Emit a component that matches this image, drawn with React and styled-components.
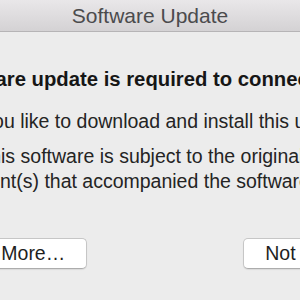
import React from "react";
import styled, {createGlobalStyle} from "styled-components";

const GlobalStyle = createGlobalStyle`
  html, body {
    margin: 0;
    padding: 0;
    background-color: #ECECEC;
    overflow: hidden;
  }
`;

const Viewport = styled.div`
  width: 300px;
  height: 300px;
  overflow: hidden;
  display: flex;
  justify-content: center;
  font-family: "Liberation Sans", Arial, sans-serif;
`;

const Dialog = styled.div`
  flex-shrink: 0;
  width: 666px;
  height: 300px;
  display: flex;
  flex-direction: column;
  background-color: #ECECEC;
`;

const TitleBar = styled.div`
  height: 31px;
  border-bottom: 1px solid #B6B4B6;
  background: linear-gradient(to bottom, #E9E7E9, #D4D2D4);
  display: flex;
  justify-content: center;
  align-items: center;
  font-size: 21px;
  line-height: 31px;
  color: #4B4B4D;
`;

const Content = styled.div`
  padding: 35px 14px 0 106px;
  display: flex;
  flex-direction: column;
`;

const Text = styled.p`
  margin: 0 0 ${props => props.gap}px 0;
  font-size: ${props => props.bold ? 20.3 : 19.5}px;
  line-height: 25px;
  font-weight: ${props => props.bold ? 700 : 400};
  color: ${props => props.bold ? "#161616" : "#242424"};
  white-space: nowrap;
`;

const ButtonRow = styled.div`
  margin-top: 44px;
  margin-left: 1px;
  display: flex;
  align-items: center;
  gap: 12px;
`;

const Spacer = styled.div`
  flex-grow: 1;
`;

const Button = styled.button`
  height: 31px;
  padding: 0 21px;
  border: 1px solid #C6C6C6;
  border-bottom-color: #ACACAC;
  border-radius: 5px;
  background-color: #FFFFFF;
  box-shadow: 0 1px 1px rgba(0, 0, 0, 0.08);
  font-family: "Liberation Sans", Arial, sans-serif;
  font-size: 19.5px;
  color: #1E1E1E;
  white-space: nowrap;
`;

export default function App() {
    return (
        <Viewport>
            <GlobalStyle/>
            <Dialog>
                <TitleBar>Software Update</TitleBar>
                <Content>
                    <Text bold gap={17}>A software update is required to connect to your iPhone.</Text>
                    <Text gap={10}>Would you like to download and install this update now?</Text>
                    <Text gap={0}>
                        Use of this software is subject to the original license<br/>
                        agreement(s) that accompanied the software being updated.
                    </Text>
                    <ButtonRow>
                        <Button>Learn More…</Button>
                        <Spacer/>
                        <Button>Not Now</Button>
                        <Button>Install</Button>
                    </ButtonRow>
                </Content>
            </Dialog>
        </Viewport>
    );
}
